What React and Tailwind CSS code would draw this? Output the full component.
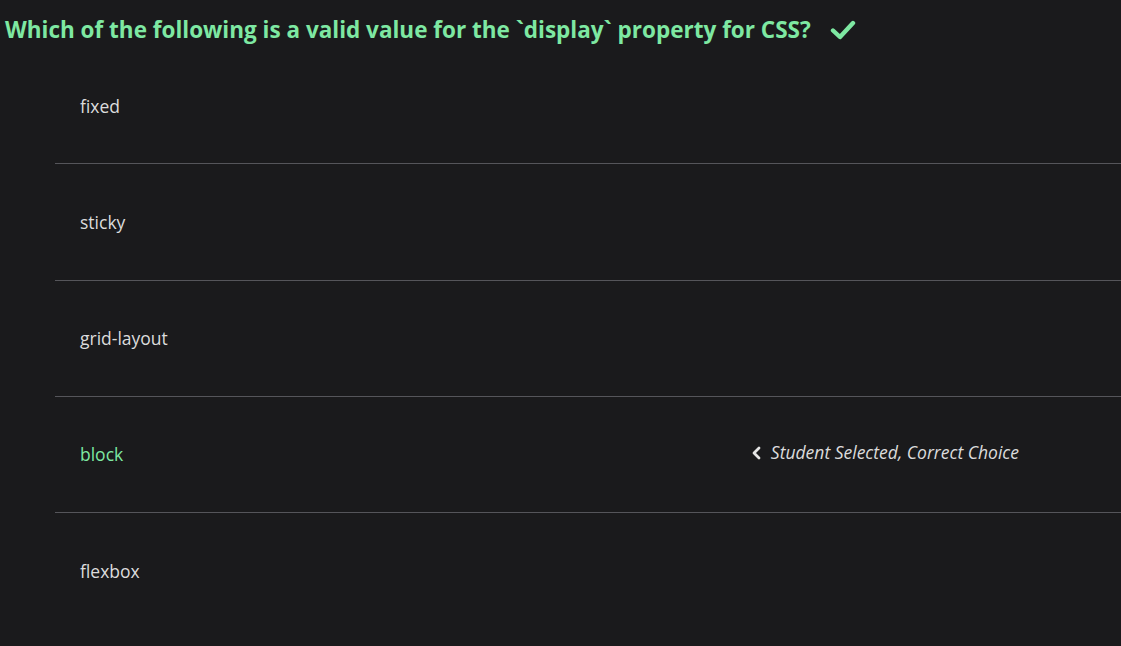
import React from "react";

const options = [
  { label: "fixed" },
  { label: "sticky" },
  { label: "grid-layout" },
  { label: "block", correct: true },
  { label: "flexbox" },
];

export default function App() {
  return (
    <div
      className="min-h-[646px] w-full bg-[#1a1a1c] text-[#dcdcdc]"
      style={{ fontFamily: '"Open Sans", "Noto Sans", sans-serif' }}
    >
      <div className="flex items-center pl-[5px] pt-[12px] h-[48px]">
        <h1 className="text-[22.5px] font-bold text-[#7ee8a2] leading-[32px]">
          Which of the following is a valid value for the `display` property for CSS?
        </h1>
        <svg className="ml-[19px] w-[26px] h-[22px]" viewBox="0 0 26 22" fill="none">
          <path d="M3 11.5 L10 18 L23 4" stroke="#7ee8a2" strokeWidth="4.4" strokeLinecap="round" strokeLinejoin="round" />
        </svg>
      </div>
      <div className="ml-[55px]">
        {options.map((o, i) => (
          <div
            key={o.label}
            className={`flex items-center justify-between h-[116.3px] pl-[25px] pr-[102px] ${i < options.length - 1 ? "border-b border-[#55555a]" : ""}`}
          >
            <span className={`text-[17.5px] ${o.correct ? "text-[#7ee8a2]" : "text-[#dcdcdc]"}`}>{o.label}</span>
            {o.correct && (
              <span className="flex items-center text-[17.5px] italic text-[#dcdcdc] -mt-[4px]">
                <svg className="w-[12px] h-[14px] mr-[8px]" viewBox="0 0 12 14" fill="none">
                  <path d="M8 2 L3 7 L8 12" stroke="#e5e5e5" strokeWidth="2.8" strokeLinecap="round" strokeLinejoin="round" />
                </svg>
                Student Selected, Correct Choice
              </span>
            )}
          </div>
        ))}
      </div>
    </div>
  );
}
